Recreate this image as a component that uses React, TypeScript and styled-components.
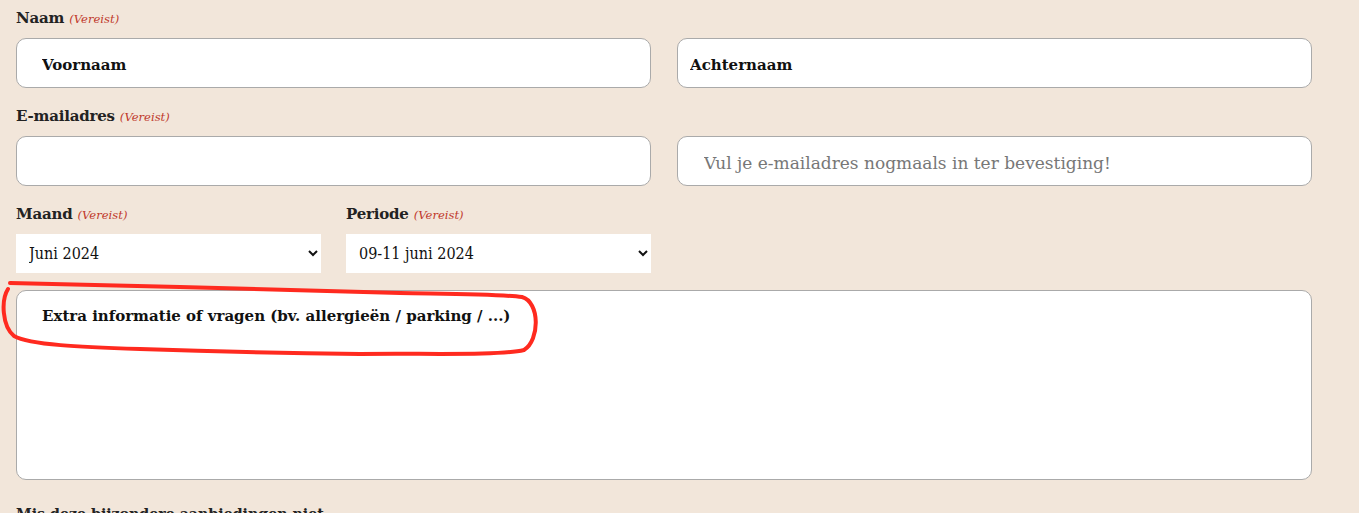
import React from 'react';
import styled, { createGlobalStyle } from 'styled-components';

const GlobalStyle = createGlobalStyle`
  html, body {
    margin: 0;
    padding: 0;
    background: #f2e6da;
    font-family: 'DejaVu Serif', 'Liberation Serif', serif;
    color: #222;
  }
`;

const StyledForm = styled.form`
  width: 1296px;
  padding: 8px 16px 0;
  display: flex;
  flex-direction: column;
  gap: 18px;
`;

const StyledGroup = styled.div`
  display: flex;
  flex-direction: column;
  gap: 10px;
`;

const StyledLabel = styled.label`
  display: block;
  height: 20px;
  font-size: 15px;
  line-height: 20px;
  font-weight: 700;
  letter-spacing: -0.2px;
  color: #222;
  white-space: nowrap;
`;

const StyledRequired = styled.span`
  font-size: 11.6px;
  line-height: 1;
  font-weight: 400;
  font-style: italic;
  letter-spacing: 0;
  color: #c0392b;
`;

const StyledPair = styled.div`
  display: grid;
  grid-template-columns: 635px 635px;
  column-gap: 26px;
`;

const StyledSelectRow = styled.div`
  display: grid;
  grid-template-columns: 305px 305px;
  column-gap: 25px;
`;

const StyledInput = styled.input<{ $inset: number; $strong?: boolean }>`
  box-sizing: border-box;
  height: 50px;
  width: 100%;
  margin: 0;
  padding: 3px 12px 0 ${({ $inset }) => $inset}px;
  border: 1px solid #aaa;
  border-radius: 10px;
  background: #fff;
  font-family: 'DejaVu Serif', serif;
  font-size: ${({ $strong }) => ($strong ? 15 : 17)}px;
  outline: none;

  &::placeholder {
    color: ${({ $strong }) => ($strong ? '#111' : '#777')};
    font-weight: ${({ $strong }) => ($strong ? 700 : 400)};
    opacity: 1;
  }
`;

const StyledSelect = styled.select`
  box-sizing: border-box;
  height: 39px;
  width: 100%;
  margin: 0;
  padding: 0 4px 0 9px;
  border: none;
  border-radius: 0;
  background: #fff;
  color: #111;
  font-family: 'DejaVu Serif', serif;
  font-stretch: condensed;
  font-size: 16px;
  outline: none;
`;

const StyledNoteBox = styled.div`
  position: relative;
  margin-top: -1px;
`;

const StyledTextarea = styled.textarea`
  box-sizing: border-box;
  display: block;
  width: 1296px;
  height: 190px;
  margin: 0;
  padding: 15px 12px 0 25px;
  border: 1px solid #aaa;
  border-radius: 10px;
  background: #fff;
  resize: none;
  font-family: 'DejaVu Serif', serif;
  font-size: 15px;
  line-height: 20px;
  outline: none;

  &::placeholder {
    color: #111;
    font-weight: 700;
    opacity: 1;
  }
`;

const StyledScribble = styled.svg`
  position: absolute;
  left: -16px;
  top: -12px;
  pointer-events: none;
  overflow: visible;
`;

const StyledHeading = styled.h3`
  margin: 6px 0 0;
  font-size: 14.2px;
  line-height: 20px;
  font-weight: 700;
  color: #222;
  white-space: nowrap;
`;

const Required = () => <StyledRequired>(Vereist)</StyledRequired>;

const App: React.FC = () => (
  <>
    <GlobalStyle />
    <StyledForm>
      <StyledGroup>
        <StyledLabel>
          Naam <Required />
        </StyledLabel>
        <StyledPair>
          <StyledInput $inset={25} $strong placeholder="Voornaam" />
          <StyledInput $inset={12} $strong placeholder="Achternaam" />
        </StyledPair>
      </StyledGroup>

      <StyledGroup>
        <StyledLabel>
          E-mailadres <Required />
        </StyledLabel>
        <StyledPair>
          <StyledInput $inset={25} />
          <StyledInput $inset={26} placeholder="Vul je e-mailadres nogmaals in ter bevestiging!" />
        </StyledPair>
      </StyledGroup>

      <StyledSelectRow>
        <StyledGroup>
          <StyledLabel>
            Maand <Required />
          </StyledLabel>
          <StyledSelect defaultValue="2024-06">
            <option value="2024-06">Juni 2024</option>
            <option value="2024-07">Juli 2024</option>
          </StyledSelect>
        </StyledGroup>
        <StyledGroup>
          <StyledLabel>
            Periode <Required />
          </StyledLabel>
          <StyledSelect defaultValue="p1">
            <option value="p1">09-11 juni 2024</option>
            <option value="p2">16-18 juni 2024</option>
          </StyledSelect>
        </StyledGroup>
      </StyledSelectRow>

      <StyledNoteBox>
        <StyledTextarea placeholder="Extra informatie of vragen (bv. allergieën / parking / ...)" />
        {/* red marker annotation from the screenshot */}
        <StyledScribble width="560" height="90" viewBox="0 278 560 90">
          <path
            d="M10 283 C 60 284, 120 286, 180 287 C 260 289, 330 291, 400 293 C 460 294, 500 294, 522 297 C 540 302, 540 340, 524 350 C 500 356, 420 353, 360 354 C 280 353, 200 351, 140 349 C 80 347, 30 345, 14 336 C 2 326, 1 300, 8 289"
            fill="none"
            stroke="#ff2a1f"
            strokeWidth="4"
            strokeLinecap="round"
            strokeLinejoin="round"
          />
        </StyledScribble>
      </StyledNoteBox>

      <StyledHeading>Mis deze bijzondere aanbiedingen niet</StyledHeading>
    </StyledForm>
  </>
);

export default App;
